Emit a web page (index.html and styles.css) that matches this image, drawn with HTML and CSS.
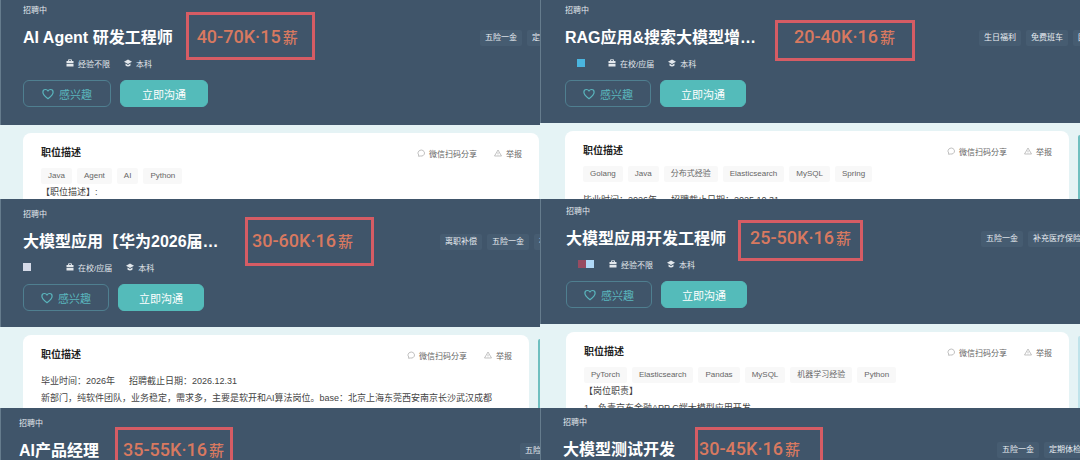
FILE: index.html
```html
<!DOCTYPE html>
<html lang="zh-CN">

<head>
    <meta charset="UTF-8">
    <meta name="viewport" content="width=device-width, initial-scale=1.0">
    <title>招聘职位</title>
    <link rel="stylesheet" href="styles.css">
</head>

<body>

    <!-- shared icons -->
    <svg class="sprite" aria-hidden="true">
        <symbol id="bag" viewBox="0 0 16 16">
            <path d="M5 4V1.500h6V4" fill="none" stroke="currentColor" stroke-width="1.800" />
            <path d="M1 4h14v4H1zM1 9.500h14V15H1z" fill="currentColor" />
        </symbol>
        <symbol id="cap" viewBox="0 0 16 16">
            <path d="M8 1l8 4.500-8 4.500-8-4.500z" fill="currentColor" />
            <path d="M3 9v4c3 2.500 7 2.500 10 0V9l-5 2.800z" fill="currentColor" />
        </symbol>
        <symbol id="heart" viewBox="0 0 16 16">
            <path d="M8 14.200C4 11.200 1.200 8.700 1.200 5.500 1.200 3.300 2.800 2 4.600 2 6 2 7.300 2.700 8 4c.7-1.300 2-2 3.400-2 1.800 0 3.400 1.300 3.400 3.500 0 3.200-2.800 5.700-6.800 8.700z" fill="none" stroke="currentColor" stroke-width="1.600" stroke-linejoin="round" />
        </symbol>
        <symbol id="chat" viewBox="0 0 16 16">
            <path d="M3 14.500l.5-2.500A6.500 6 0 1 1 7 14z" fill="none" stroke="currentColor" stroke-width="1.500" stroke-linejoin="round" />
        </symbol>
        <symbol id="warn" viewBox="0 0 16 16">
            <path d="M8 2l7 12H1zM8 6.500v3.500M8 11.200v1.300" fill="none" stroke="currentColor" stroke-width="1.400" stroke-linejoin="round" />
        </symbol>
    </svg>

    <main class="board">

        <section class="job job-1">
            <header class="banner">
                <p class="status">招聘中</p>
                <div class="title-row">
                    <h1>AI Agent 研发工程师</h1>
                    <span class="salary">40-70K·15<small>薪</small></span>
                    <ul class="perks"><li>五险一金</li><li>定期体检</li></ul>
                </div>
                <div class="info">
                    <span class="city"></span>
                    <span class="item"><svg><use href="#bag" /></svg>经验不限</span>
                    <span class="item"><svg><use href="#cap" /></svg>本科</span>
                </div>
                <div class="actions">
                    <button type="button" class="like"><svg><use href="#heart" /></svg>感兴趣</button>
                    <button type="button" class="talk">立即沟通</button>
                </div>
            </header>
            <div class="detail">
                <article class="card">
                    <div class="card-head">
                        <h2>职位描述</h2>
                        <a href="#"><svg><use href="#chat" /></svg>微信扫码分享</a>
                        <a href="#"><svg><use href="#warn" /></svg>举报</a>
                    </div>
                    <ul class="tags"><li>Java</li><li>Agent</li><li>AI</li><li>Python</li></ul>
                    <p>【职位描述】:</p>
                </article>
            </div>
        </section>

        <section class="job job-2">
            <header class="banner">
                <p class="status">招聘中</p>
                <div class="title-row">
                    <h1 class="long">RAG应用&amp;搜索大模型增…</h1>
                    <span class="salary">20-40K·16<small>薪</small></span>
                    <ul class="perks"><li>生日福利</li><li>免费班车</li><li>团建聚餐</li></ul>
                </div>
                <div class="info">
                    <span class="city"><i class="dot blue"></i></span>
                    <span class="item"><svg><use href="#bag" /></svg>在校/应届</span>
                    <span class="item"><svg><use href="#cap" /></svg>本科</span>
                </div>
                <div class="actions">
                    <button type="button" class="like"><svg><use href="#heart" /></svg>感兴趣</button>
                    <button type="button" class="talk">立即沟通</button>
                </div>
            </header>
            <div class="detail">
                <article class="card">
                    <div class="card-head">
                        <h2>职位描述</h2>
                        <a href="#"><svg><use href="#chat" /></svg>微信扫码分享</a>
                        <a href="#"><svg><use href="#warn" /></svg>举报</a>
                    </div>
                    <ul class="tags"><li>Golang</li><li>Java</li><li>分布式经验</li><li>Elasticsearch</li><li>MySQL</li><li>Spring</li></ul>
                    <p class="spaced"><span class="date">毕业时间：2026年</span>招聘截止日期：2025.10.31</p>
                </article>
                <div class="side"></div>
            </div>
        </section>

        <section class="job job-3">
            <header class="banner">
                <p class="status">招聘中</p>
                <div class="title-row">
                    <h1 class="long">大模型应用【华为2026届…</h1>
                    <span class="salary">30-60K·16<small>薪</small></span>
                    <ul class="perks"><li>离职补偿</li><li>五险一金</li><li>补充医疗保险</li></ul>
                </div>
                <div class="info">
                    <span class="city"><i class="dot grey"></i></span>
                    <span class="item"><svg><use href="#bag" /></svg>在校/应届</span>
                    <span class="item"><svg><use href="#cap" /></svg>本科</span>
                </div>
                <div class="actions">
                    <button type="button" class="like"><svg><use href="#heart" /></svg>感兴趣</button>
                    <button type="button" class="talk">立即沟通</button>
                </div>
            </header>
            <div class="detail">
                <article class="card">
                    <div class="card-head">
                        <h2>职位描述</h2>
                        <a href="#"><svg><use href="#chat" /></svg>微信扫码分享</a>
                        <a href="#"><svg><use href="#warn" /></svg>举报</a>
                    </div>
                    <p class="spaced"><span class="date">毕业时间：2026年</span>招聘截止日期：2026.12.31</p>
                    <p>新部门，纯软件团队，业务稳定，需求多，主要是软开和AI算法岗位。base：北京上海东莞西安南京长沙武汉成都</p>
                </article>
                <div class="side"></div>
            </div>
        </section>

        <section class="job job-4">
            <header class="banner">
                <p class="status">招聘中</p>
                <div class="title-row">
                    <h1>大模型应用开发工程师</h1>
                    <span class="salary">25-50K·16<small>薪</small></span>
                    <ul class="perks"><li>五险一金</li><li>补充医疗保险</li></ul>
                </div>
                <div class="info">
                    <span class="city"><i class="dot red"></i><i class="dot sky"></i></span>
                    <span class="item"><svg><use href="#bag" /></svg>经验不限</span>
                    <span class="item"><svg><use href="#cap" /></svg>本科</span>
                </div>
                <div class="actions">
                    <button type="button" class="like"><svg><use href="#heart" /></svg>感兴趣</button>
                    <button type="button" class="talk">立即沟通</button>
                </div>
            </header>
            <div class="detail">
                <article class="card">
                    <div class="card-head">
                        <h2>职位描述</h2>
                        <a href="#"><svg><use href="#chat" /></svg>微信扫码分享</a>
                        <a href="#"><svg><use href="#warn" /></svg>举报</a>
                    </div>
                    <ul class="tags"><li>PyTorch</li><li>Elasticsearch</li><li>Pandas</li><li>MySQL</li><li>机器学习经验</li><li>Python</li></ul>
                    <p>【岗位职责】</p>
                    <p>1、负责京东金融APP C端大模型应用开发</p>
                </article>
                <div class="side"></div>
            </div>
        </section>

        <section class="job job-5">
            <header class="banner">
                <p class="status">招聘中</p>
                <div class="title-row">
                    <h1>AI产品经理</h1>
                    <span class="salary">35-55K·16<small>薪</small></span>
                    <ul class="perks"><li>五险一金</li></ul>
                </div>
            </header>
        </section>

        <section class="job job-6">
            <header class="banner">
                <p class="status">招聘中</p>
                <div class="title-row">
                    <h1>大模型测试开发</h1>
                    <span class="salary">30-45K·16<small>薪</small></span>
                    <ul class="perks"><li>五险一金</li><li>定期体检</li></ul>
                </div>
            </header>
        </section>

    </main>

</body>

</html>
```

FILE: styles.css
```css
* {
    box-sizing: border-box;
}

body {
    margin: 0;
    font-family: "Liberation Sans", "Noto Sans CJK SC", sans-serif;
    font-size: 8px;
    color: #333;
    background-color: #e5f3f5;
}

h1,
h2,
p,
ul {
    margin: 0;
    padding: 0;
}

ul {
    display: flex;
    list-style: none;
}

svg {
    width: 8px;
    height: 8px;
    flex: none;
}

.sprite {
    display: none;
}

.board {
    display: grid;
    grid-template-columns: 1fr 1fr;
    grid-template-rows: 199fr 209fr 52fr;
    height: 100vh;
    overflow: hidden;
}

/* each job is cut off by the next one */
.job {
    min-width: 0;
    min-height: 0;
    overflow: hidden;
    display: flex;
    flex-direction: column;
}

.banner {
    flex: none;
    padding: var(--top) 0 16px var(--left);
    color: #fff;
    background-color: #40556a;
    border-left: 1px solid #667c8d;
}

.job-5 .banner,
.job-6 .banner {
    flex: 1 0 auto;
}

.status {
    line-height: 12px;
    color: #e3e8ec;
}

.title-row {
    display: flex;
    align-items: center;
    height: 28px;
    margin-top: 7px;
    white-space: nowrap;
}

.title-row h1 {
    font-size: 16px;
    line-height: 28px;
}

.title-row .long {
    min-width: 205px;
}

.salary {
    position: relative;
    margin: 0 0 2px 24px;
    font-family: Roboto, "Noto Sans CJK SC", sans-serif;
    font-size: 18px;
    font-weight: 500;
    line-height: 20px;
    color: #d87960;
}

.salary small {
    font-size: 15px;
    line-height: 16px;
    margin-left: 2px;
}

/* red frame drawn over the banner */
.salary::after {
    content: "";
    position: absolute;
    inset: var(--frame);
    border: 3px solid #d65c64;
}

.perks {
    flex: 0 0 var(--perks);
    gap: 5px;
    margin-left: auto;
    overflow: hidden;
}

.perks li {
    flex: none;
    padding: 0 5px;
    line-height: 16px;
    color: #e9eef1;
    background-color: #465c71;
    border-radius: 2px;
}

.info {
    display: flex;
    align-items: center;
    gap: 14px;
    height: 12px;
    margin-top: 5px;
    color: #e3e8ec;
}

.city {
    display: flex;
    width: 29px;
    padding-left: 12px;
}

.job-3 .city {
    padding-left: 0;
}

.dot {
    width: 8px;
    height: 8px;
}

.blue {
    background-color: #4ab5df;
}

.grey {
    background-color: #d5dae8;
}

.red {
    background-color: #974b61;
}

.sky {
    background-color: #b0d8f7;
}

.item {
    display: flex;
    align-items: center;
    gap: 4px;
}

.actions {
    display: flex;
    gap: 9px;
    margin-top: 11px;
}

.actions button {
    display: flex;
    align-items: center;
    justify-content: center;
    gap: 5px;
    width: 86px;
    height: 27px;
    padding: 0;
    font-family: inherit;
    font-size: 11px;
    border: 1px solid #4f7f90;
    border-radius: 6px;
    color: #5ab5bd;
    background-color: transparent;
    cursor: pointer;
}

.actions .talk {
    color: #fff;
    border-color: #54bbba;
    background-color: #54bbba;
}

.actions svg {
    width: 12px;
    height: 12px;
}

.detail {
    flex: 1;
    display: flex;
    gap: 9px;
    min-height: 0;
    padding: 8px 0 0 var(--left);
    margin-left: 1px;
}

.card {
    flex: 1;
    min-width: 0;
    padding: 12px 17px 0 18px;
    background-color: #fff;
    border-radius: 8px 8px 0 0;
}

.card-head {
    display: flex;
    align-items: center;
    gap: 17px;
}

.card-head h2 {
    margin-right: auto;
    font-size: 10px;
    line-height: 16px;
    color: #222;
}

.card-head a {
    display: flex;
    align-items: center;
    gap: 4px;
    color: #666;
    text-decoration: none;
}

.card-head svg {
    color: #aaa;
}

.tags {
    gap: 5px;
    margin-top: 7px;
}

.tags li {
    padding: 0 7px;
    line-height: 16px;
    color: #666;
    background-color: #f8f8f8;
    border-radius: 2px;
}

.card p {
    font-size: 9px;
    line-height: 17px;
    color: #444;
    white-space: nowrap;
}

.card .spaced {
    margin-top: 10px;
}

.date {
    margin-right: 14px;
}

.side {
    width: 2px;
    margin-top: 4px;
    border-radius: 2px 0 0 0;
    background-color: #6fbfc0;
}

.job-1 {
    --top: 5px;
    --left: 22px;
    --perks: 60px;
    --frame: -15px -17px -13px -11px;
}

.job-1 .banner {
    padding-bottom: 18px;
}

.job-1 .actions button {
    width: 88px;
}

.job-1 .detail {
    padding-right: 1px;
}

.job-2 {
    --top: 5px;
    --left: 24px;
    --perks: 101px;
    --frame: -7px -20px -14px -19px;
}

.job-3 {
    --top: 10px;
    --left: 22px;
    --perks: 100px;
    --frame: -14px -21px -15px -7px;
}

.job-4 {
    --top: 7px;
    --left: 25px;
    --perks: 99px;
    --frame: -8px -12px -13px -12px;
}

.job-4 .side {
    background-color: #bfe3ea;
}

.job-5 {
    --top: 10px;
    --left: 18px;
    --perks: 20px;
    --frame: -13px -9px -13px -8px;
}

.job-6 {
    --top: 9px;
    --left: 22px;
    --perks: 83px;
    --frame: -12px -23px -13px -4px;
}
```
